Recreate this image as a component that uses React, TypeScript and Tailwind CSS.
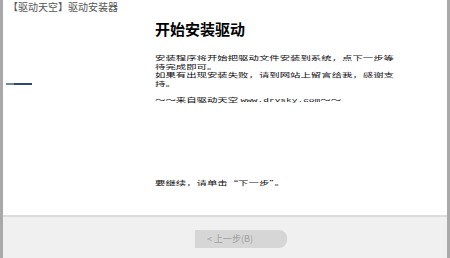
import type { FC } from "react";

const cjk = { fontFamily: '"Noto Sans CJK SC", "Noto Sans", sans-serif' };

// the source dialog's text is squashed vertically; keep glyphs wide and short
const squash = "origin-top scale-y-[0.58] text-[10.4px] leading-[15.1px] text-[#111]";

const App: FC = () => {
  return (
    <div
      className="flex h-[258px] w-[450px] flex-col overflow-hidden border-x-[3px] border-x-[#a9a9a9] bg-white text-[#1e1e1e]"
      style={cjk}
    >
      {/* Main area */}
      <div className="flex h-[215px] flex-row">
        {/* Left banner */}
        <div className="flex w-[150px] flex-col">
          <div className="pl-[5px] pt-[1px] text-[10px] leading-[12px] text-[#555]">
            【驱动天空】驱动安装器
          </div>
          <div className="ml-[3px] mt-[70px] flex h-[2px] w-[26px]">
            <div className="h-full w-[8px] bg-[#6f8a96]" />
            <div className="h-full flex-1 bg-[#2f4a63]" />
          </div>
        </div>

        {/* Content */}
        <div className="flex flex-1 flex-col pl-[2px] pt-[21px]">
          <h1 className="text-[15px] font-bold leading-[16px] text-black">开始安装驱动</h1>
          <div className={`mb-[-25px] mt-[16px] ${squash}`}>
            <div>安装程序将开始把驱动文件安装到系统，点下一步等</div>
            <div>待完成即可。</div>
            <div>如果有出现安装失败，请到网站上留言给我，感谢支</div>
            <div>持。</div>
          </div>
          <div className={`mb-[-6px] mt-[7px] ${squash}`}>
            ～～来自驱动天空{" "}
            <span
              style={{ fontFamily: '"Liberation Mono", monospace' }}
              className="text-[9.5px]"
            >
              www.drvsky.com
            </span>
            ～～
          </div>
          <div className={`mt-[72px] ${squash}`}>要继续，请单击“下一步”。</div>
        </div>
      </div>

      {/* Button bar */}
      <div className="flex flex-1 flex-row border-t-[2px] border-t-[#dcdcdc] bg-[#f0f0f0] pl-[192px] pt-[13px]">
        <div className="flex h-[18px] w-[92px] items-center rounded-r-[8px] bg-[#d6d6d6] pl-[12px] text-[9px] text-[#a0a0a0]">
          &lt; 上一步(B)
        </div>
      </div>
    </div>
  );
};

export default App;
